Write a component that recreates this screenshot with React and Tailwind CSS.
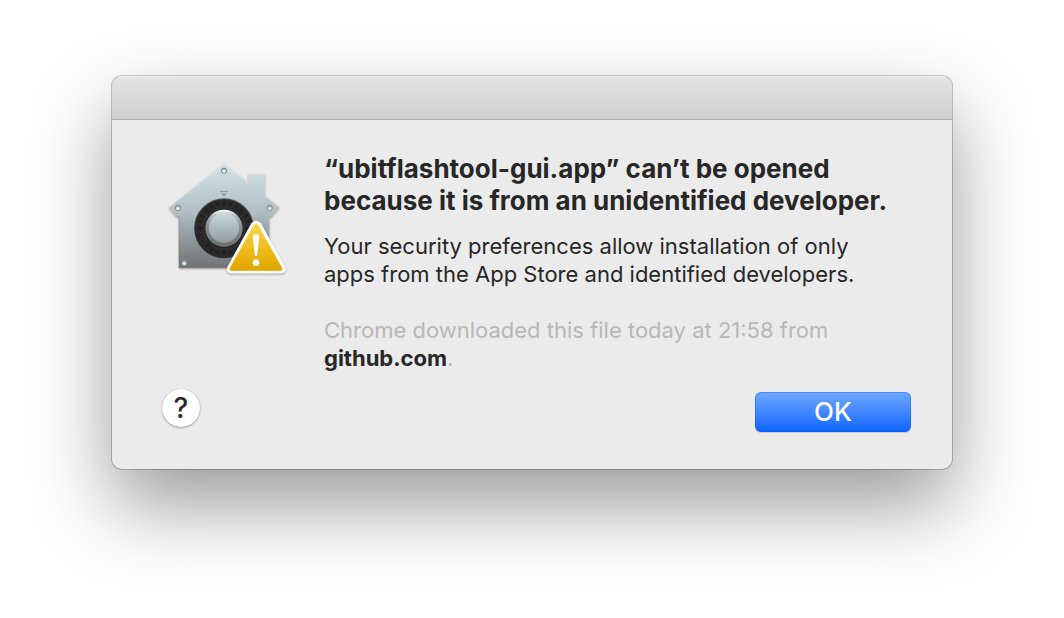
const SCREWS = [
    { x: 204, y: 62 },
    { x: 66, y: 174 },
    { x: 341, y: 174 },
    { x: 85, y: 339 },
];

const TICKS = Array.from({ length: 24 }, (_, i) => i * 15);

function GatekeeperIcon() {
    return (
        <svg viewBox="30 30 366 348" className="w-[122px] h-[116px] shrink-0" role="img" aria-label="Warning">
            <defs>
                <linearGradient id="house" x1="0" y1="0" x2="0" y2="1">
                    <stop offset="0" stopColor="#d3e4e9" />
                    <stop offset="0.45" stopColor="#b2c0c5" />
                    <stop offset="0.75" stopColor="#8e9598" />
                    <stop offset="1" stopColor="#727374" />
                </linearGradient>
                <linearGradient id="rim" x1="0" y1="0" x2="0" y2="1">
                    <stop offset="0" stopColor="#ffffff" />
                    <stop offset="0.15" stopColor="#b9c2c6" />
                    <stop offset="0.4" stopColor="#8b9295" />
                    <stop offset="1" stopColor="#6a6e70" />
                </linearGradient>
                <linearGradient id="knob" x1="0" y1="0" x2="0" y2="1">
                    <stop offset="0" stopColor="#cbdce2" />
                    <stop offset="0.5" stopColor="#abbac0" />
                    <stop offset="1" stopColor="#909a9e" />
                </linearGradient>
                <linearGradient id="screw" x1="0" y1="0" x2="0" y2="1">
                    <stop offset="0" stopColor="#8b9699" />
                    <stop offset="0.5" stopColor="#dde4e6" />
                    <stop offset="1" stopColor="#f2f5f6" />
                </linearGradient>
                <linearGradient id="sign" x1="0" y1="0" x2="0" y2="1">
                    <stop offset="0" stopColor="#fbd64d" />
                    <stop offset="0.5" stopColor="#efbe1c" />
                    <stop offset="1" stopColor="#dfa400" />
                </linearGradient>
                <filter id="drop" x="-10%" y="-10%" width="120%" height="125%">
                    <feDropShadow dx="0" dy="3" stdDeviation="3" floodColor="#000" floodOpacity="0.4" />
                </filter>
            </defs>

            {/* house plate */}
            <path
                d="M204 40 L277 98 V75 Q277 71 281 71 H322 Q326 71 326 75 V136 L370 172 L345 201 H340 V353 H69 V201 H63 L38 173 Z"
                fill="url(#house)"
                filter="url(#drop)"
            />
            <path d="M40 172 L204 41 L277 99 M278 73 H325 M327 138 L368 172" fill="none" stroke="#e6eff2" strokeWidth="2" opacity="0.7" />
            <path d="M63 200 H69 V352 H340" fill="none" stroke="#666b6e" strokeWidth="2" opacity="0.5" />

            {SCREWS.map(s => (
                <circle key={`${s.x}-${s.y}`} cx={s.x} cy={s.y} r="8" fill="url(#screw)" stroke="#7d868a" strokeWidth="3" />
            ))}

            {/* dial pointer */}
            <path d="M192 124 H216 M197 128 L201 137 L204 130 L207 137 L211 128" fill="none" stroke="#8b969a" strokeWidth="3" />

            {/* dial */}
            <circle cx="204" cy="235" r="90" fill="#55595b" />
            <circle cx="204" cy="236" r="88" fill="#292929" />
            <circle cx="204" cy="235" r="65" fill="#2e2e2e" />
            {TICKS.map((a, i) => (
                <line
                    key={a}
                    x1="204"
                    y1="155"
                    x2="204"
                    y2={i % 3 === 0 ? 171 : 165}
                    stroke="#141414"
                    strokeWidth="3"
                    transform={`rotate(${a} 204 235)`}
                />
            ))}
            <circle cx="204" cy="236" r="58" fill="#1c1c1c" />
            <circle cx="204" cy="235" r="56" fill="url(#rim)" />
            <circle cx="204" cy="234" r="45" fill="url(#knob)" />

            {/* warning sign */}
            <path
                d="M286 220 Q300 204 315 220 L387 351 Q393 367 376 370 H225 Q208 367 214 351 Z"
                fill="#fbfbf8"
                filter="url(#drop)"
            />
            <path d="M293 226 Q300 216 307 226 L378 353 Q382 361 373 362 H227 Q218 361 222 353 Z" fill="url(#sign)" />
            <g fill="#fffdf5" stroke="#b88c12" strokeOpacity="0.3" strokeWidth="1">
                <path d="M290 262 Q290 252 300 252 Q310 252 310 262 L304 316 Q300 322 296 316 Z" />
                <circle cx="300" cy="338" r="10" />
            </g>
        </svg>
    );
}

export default function App() {
    return (
        <main className="px-28 pt-[76px] pb-36 bg-white font-[Inter,sans-serif] text-[#272727]">
            <section
                role="dialog"
                aria-labelledby="titulo"
                className="rounded-[10px] overflow-hidden bg-[#ebebeb] shadow-[0_0_0_1px_rgba(0,0,0,0.22),0_36px_80px_rgba(0,0,0,0.4)]"
            >
                <header className="h-11 bg-linear-to-b from-[#e4e4e4] to-[#d0d0d0] border-b border-[#acacac] shadow-[inset_0_1px_0_#f3f3f3]" />

                <div className="pl-[50px] pr-[41px] pt-[33px] pb-[37px]">
                    <div className="flex items-start gap-9">
                        <div className="pl-1 pt-[7px]">
                            <GatekeeperIcon />
                        </div>
                        <div>
                            <h1 id="titulo" className="text-[26px] leading-8 font-bold">
                                “ubitflashtool-gui.app” can’t be opened
                                <br />
                                because it is from an unidentified developer.
                            </h1>
                            <p className="mt-[15px] text-[22px] leading-7">
                                Your security preferences allow installation of only
                                <br />
                                apps from the App Store and identified developers.
                            </p>
                            <p className="mt-7 text-[22px] leading-7 text-[#b7b7b7]">
                                Chrome downloaded this file today at 21:58 from
                                <br />
                                <strong className="font-bold text-[#272727]">github.com</strong>.
                            </p>
                        </div>
                    </div>

                    <div className="mt-[17px] flex items-end justify-between">
                        <button
                            type="button"
                            aria-label="Help"
                            className="size-[38px] mb-[5px] rounded-full bg-white text-[28px] leading-[38px] font-medium shadow-[0_0_1px_rgba(0,0,0,0.3),0_1px_2px_rgba(0,0,0,0.3)]"
                        >
                            ?
                        </button>
                        <button
                            type="button"
                            className="w-[156px] h-10 rounded-md bg-linear-to-b from-[#6ea7ff] to-[#0562ff] text-white text-[26px] leading-10 font-medium shadow-[inset_0_0_0_1px_rgba(0,90,240,0.35),0_1px_1px_rgba(0,0,0,0.15)]"
                        >
                            OK
                        </button>
                    </div>
                </div>
            </section>
        </main>
    );
}
